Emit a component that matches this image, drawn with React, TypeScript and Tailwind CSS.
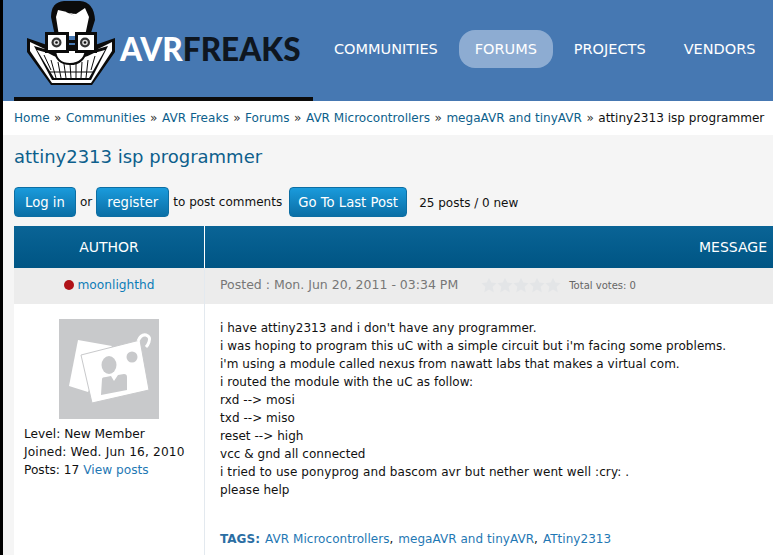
// AVR Freaks forum thread page
import React from "react";

const font = "font-['Tahoma','DejaVu_Sans',sans-serif]";

const Logo = () => (
  <svg width="100" height="90" viewBox="0 0 100 90" className="shrink-0">
    {/* head */}
    <path d="M31 17 Q31 2 44 1 L60 1 Q74 2 75 20 L70 36 L35 36 Z" fill="#0b0b0b" />
    <path d="M36 17 L38 10 L47 12 L56 14 L65 8 L69 17 L65 36 L39 36 Z" fill="#fff" />
    <path d="M47 10 L56 14 L49 13 L55 16 L46 12 Z" fill="#0b0b0b" />
    {/* grin */}
    <path d="M7 38 L27 45 L75 45 L95 38 L95 52 L72 85 L31 85 L7 52 Z" fill="#0b0b0b" />
    <path d="M10 42 L10 51 L32 83 L71 83 L92 51 L92 42 L76 50 L27 50 Z" fill="#fff" />
    <path d="M14 46 L28 50 L74 50 L88 46 L71 80 L32 80 Z" fill="#0b0b0b" />
    <path d="M17 50 L28 53 Q50 66 74 53 L85 50 L69 78 L34 78 Z" fill="#fff" />
    {/* teeth */}
    <path d="M24 55 L31 70 M31 60 L36 78 M38 62 L41 78 M44 64 L46 78 M50 64 L51 78 M56 64 L56 78 M62 62 L61 78 M68 60 L66 78 M75 56 L71 70 M29 72 L74 72" stroke="#0b0b0b" strokeWidth="1" fill="none" />
    {/* chin */}
    <path d="M35 50 Q36 64 50 64 Q64 64 66 50 Z" fill="#fff" stroke="#0b0b0b" strokeWidth="2" />
    {/* glasses */}
    <rect x="26.5" y="33.5" width="21" height="18" fill="#fff" stroke="#0b0b0b" strokeWidth="3" />
    <rect x="56.5" y="33.5" width="19" height="18" fill="#fff" stroke="#0b0b0b" strokeWidth="3" />
    <rect x="47" y="40" width="9" height="3" fill="#0b0b0b" />
    <circle cx="36.5" cy="42.5" r="5" fill="#333" />
    <circle cx="36.5" cy="42.5" r="2.8" fill="#ddd" />
    <circle cx="36.5" cy="42.5" r="1.3" fill="#111" />
    <circle cx="65" cy="42.5" r="5" fill="#333" />
    <circle cx="65" cy="42.5" r="2.8" fill="#ddd" />
    <circle cx="65" cy="42.5" r="1.3" fill="#111" />
  </svg>
);

const Avatar = () => (
  <div className="w-[100px] h-[100px] bg-[#c8c9cb] mx-auto">
    <svg width="100" height="100" viewBox="0 0 100 100">
      <path d="M19 21 L53 27 L29 73 L10 67 Z" fill="#fff" />
      <path d="M22 36 L81 21 L90 71 L33 84 Z" fill="#fff" stroke="#c8c9cb" strokeWidth="1" />
      <path d="M79 22 Q82 15 87 16 Q92 18 90 23 Q89 26 87 28" fill="none" stroke="#fff" strokeWidth="3" />
      <circle cx="73" cy="38" r="5.5" fill="#c8c9cb" />
      <ellipse cx="50" cy="46" rx="7.5" ry="9" fill="#c8c9cb" />
      <path d="M43 60 Q43 58 47 58 L52 57 L55 62 L59 56 L65 55 Q68 55 68 58 L68 71 L42 76 Z" fill="#c8c9cb" />
    </svg>
  </div>
);

const Star = () => (
  <svg width="16" height="16" viewBox="0 0 24 24" fill="#e3e5e7">
    <path d="M12 1 L15.4 8.4 L23.5 9.3 L17.5 14.8 L19.1 22.8 L12 18.8 L4.9 22.8 L6.5 14.8 L0.5 9.3 L8.6 8.4 Z" />
  </svg>
);

const Btn = ({ children, w }: { children: React.ReactNode; w: string }) => (
  <a className={`${w} h-[30px] pt-[1px] flex items-center justify-center rounded-[4px] text-white text-[13.2px] border border-[#0d6ea3] bg-gradient-to-b from-[#1a9bdc] to-[#0b6fa6]`}>
    {children}
  </a>
);

const Sep = () => <span className="mx-[4.5px] text-[#333]">»</span>;

export default function App() {
  return (
    <div className={`${font} h-[555px] overflow-hidden border-l-[3px] border-black bg-[#f5f5f5] text-[12px] text-[#111]`}>
      {/* header */}
      <header className="h-[101px] bg-[#4678b2] flex items-start overflow-hidden">
        <div className="ml-[11px] w-[299px] h-[101px] border-b-[4px] border-[#0b0b0b] shrink-0 flex items-start">
          <div className="ml-[6px]"><Logo /></div>
          <div className="mt-[30px] text-[31.5px] font-['Lato',sans-serif] font-black leading-[38px] whitespace-nowrap">
            <span className="text-white">AVR</span>
            <span className="text-[#0e1620]">FREAKS</span>
          </div>
        </div>
        <nav className="flex items-center ml-[21px] mt-[30px] text-white text-[14.5px] whitespace-nowrap">
          <a className="h-[38px] pt-[2px] flex items-center">COMMUNITIES</a>
          <a className="ml-[21px] w-[94px] h-[38px] pt-[2px] flex items-center justify-center bg-[#8dacd2] rounded-[16px]">FORUMS</a>
          <a className="ml-[21px] h-[38px] pt-[2px] flex items-center">PROJECTS</a>
          <a className="ml-[38px] h-[38px] pt-[2px] flex items-center">VENDORS</a>
        </nav>
      </header>

      {/* breadcrumb */}
      <div className="h-[34px] bg-white pl-[11px] flex items-center text-[12.05px] text-[#0d5f8c] whitespace-nowrap">
        <a>Home</a><Sep />
        <a>Communities</a><Sep />
        <a>AVR Freaks</a><Sep />
        <a>Forums</a><Sep />
        <a>AVR Microcontrollers</a><Sep />
        <a>megaAVR and tinyAVR</a><Sep />
        <span className="text-[#111]">attiny2313 isp programmer</span>
      </div>

      {/* main */}
      <main className="pl-[11px]">
        <h1 className="mt-[10px] text-[18px] leading-[24px] text-[#0d5f8c] font-normal">attiny2313 isp programmer</h1>

        <div className="mt-[18px] flex items-center text-[12px] whitespace-nowrap">
          <Btn w="w-[62px]">Log in</Btn>
          <span className="ml-[4px]">or</span>
          <div className="ml-[4px]"><Btn w="w-[73px]">register</Btn></div>
          <span className="ml-[4px]">to post comments</span>
          <div className="ml-[7px]"><Btn w="w-[118px]">Go To Last Post</Btn></div>
          <span className="ml-[12px] mt-[1px]">25 posts / 0 new</span>
        </div>

        <div className="mt-[9px] bg-white">
          <div className="h-[42px] flex bg-gradient-to-b from-[#0a6496] to-[#005584] text-white text-[14px]">
            <div className="w-[191px] border-r border-white flex items-center justify-center">AUTHOR</div>
            <div className="flex-1 flex items-center justify-end pr-[6px]">MESSAGE</div>
          </div>
          <div className="h-[36px] flex bg-[#ececec]">
            <div className="w-[191px] border-r border-[#e3e9ef] flex items-center justify-center text-[12.2px] text-[#0d7cb8] gap-[4px] pb-[2px]">
              <span className="w-[10px] h-[10px] rounded-full bg-[#b01218]" />
              <a>moonlighthd</a>
            </div>
            <div className="flex-1 pl-[15px] flex items-center text-[12.5px] text-[#777] pb-[2px]">
              <span>Posted : Mon. Jun 20, 2011 - 03:34 PM</span>
              <span className="ml-[23px] flex"><Star /><Star /><Star /><Star /><Star /></span>
              <span className="ml-[8px] text-[10px] text-[#666]">Total votes: 0</span>
            </div>
          </div>
          <div className="h-[251px] flex">
            <div className="w-[191px] border-r border-[#e3e9ef] pt-[15px]">
              <Avatar />
              <div className="mt-[6px] pl-[10px] leading-[18px] text-[12.2px]">
                <div>Level: New Member</div>
                <div className="tracking-[0.15px]">Joined: Wed. Jun 16, 2010</div>
                <div>Posts: 17 <a className="text-[#1f78b4]">View posts</a></div>
              </div>
            </div>
            <div className="flex-1 pl-[15px] pt-[15px] leading-[18px] whitespace-nowrap tracking-[0.04px]">
              <p>i have attiny2313 and i don't have any programmer.</p>
              <p>i was hoping to program this uC with a simple circuit but i'm facing some problems.</p>
              <p>i'm using a module called nexus from nawatt labs that makes a virtual com.</p>
              <p>i routed the module with the uC as follow:</p>
              <p>rxd --&gt; mosi</p>
              <p>txd --&gt; miso</p>
              <p>reset --&gt; high</p>
              <p>vcc &amp; gnd all connected</p>
              <p className="tracking-[0.1px]">i tried to use ponyprog and bascom avr but nether went well :cry: .</p>
              <p>please help</p>
              <p className="mt-[31px] flex">
                <b className="text-[#2b6ea3]">TAGS:</b>
                <a className="ml-[5px] text-[#1f78b4]">AVR Microcontrollers</a>,
                <a className="ml-[5px] text-[#1f78b4]">megaAVR and tinyAVR</a>,
                <a className="ml-[5px] text-[#1f78b4]">ATtiny2313</a>
              </p>
            </div>
          </div>
        </div>
      </main>
    </div>
  );
}
